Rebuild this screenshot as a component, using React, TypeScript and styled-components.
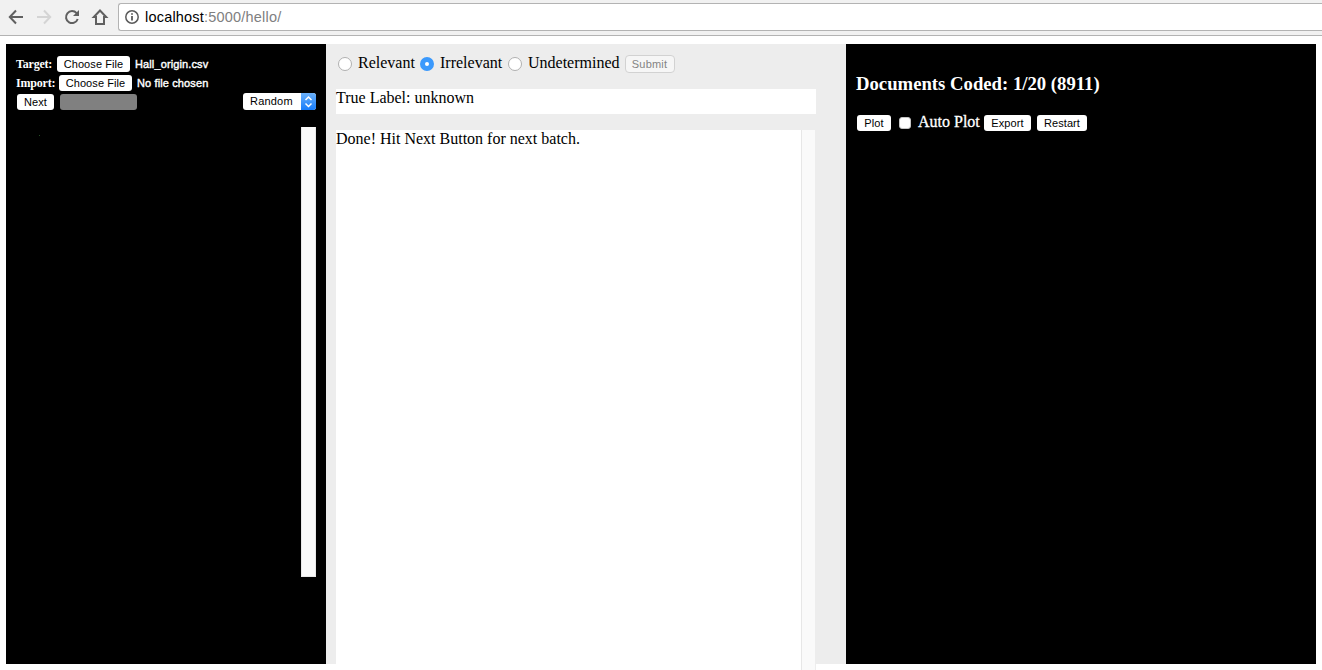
import React from "react";
import styled, { createGlobalStyle } from "styled-components";

const Global = createGlobalStyle`
  * { box-sizing: border-box; }
  html, body { margin: 0; padding: 0; background: #fff; overflow: hidden; }
  body { font: 16px "Liberation Serif", "Times New Roman", serif; color: #000; }
`;

const Window = styled.div`
  width: 1322px;
  height: 670px;
  overflow: hidden;
`;
const Toolbar = styled.header`
  display: flex;
  height: 36px;
  padding: 3px 0 0 7px;
  background: #f1f1f1;
  border-bottom: 1px solid #b3b3b3;
`;
const NavIcons = styled.svg`
  width: 111px;
  height: 28px;
  flex: none;
`;
const AddressBar = styled.div`
  display: flex;
  align-items: center;
  flex: 1;
  height: 28px;
  padding-left: 6px;
  background: #fff;
  border: 1px solid #b3b3b3;
  border-right: 0;
  border-radius: 3px 0 0 3px;
  font: 14.5px/20px "Liberation Sans", Arial, sans-serif;
  color: #808080;
`;
const InfoIcon = styled.svg`
  width: 14px;
  height: 14px;
  margin-right: 6px;
`;
const Url = styled.span`
  letter-spacing: 0.2px;
  b { font-weight: 400; color: #000; }
`;

const Page = styled.main`
  display: flex;
  height: 634px;
  padding: 8px 6px 0;
`;
const Sidebar = styled.section`
  width: 320px;
  height: 620px;
  padding: 10px;
  background: #000;
  color: #fff;
`;
const Center = styled.section`
  width: 520px;
  height: 620px;
  padding: 10px;
  background: #ededed;
`;
const Status = styled.section`
  width: 470px;
  height: 620px;
  padding: 28px 10px 0;
  background: #000;
  color: #fff;
`;

const Row = styled.div<{ $height: number; $indent?: number }>`
  display: flex;
  align-items: center;
  height: ${(p) => p.$height}px;
  padding-left: ${(p) => p.$indent ?? 0}px;
  white-space: nowrap;
`;
const FieldLabel = styled.span<{ $width: number }>`
  width: ${(p) => p.$width}px;
  font-size: 12px;
  font-weight: 700;
  line-height: 16px;
  letter-spacing: -0.2px;
`;
const Button = styled.button<{ $width: number; $gap?: number }>`
  display: block;
  flex: none;
  width: ${(p) => p.$width}px;
  height: 16px;
  margin: 0 ${(p) => p.$gap ?? 0}px 0 0;
  padding: 0;
  border: 0;
  border-radius: 3px;
  background: #fff;
  color: #000;
  font: 11px/16px "Liberation Sans", Arial, sans-serif;
  letter-spacing: 0.08px;
  text-align: center;
  white-space: nowrap;
`;
const SubmitButton = styled(Button)`
  height: 18px;
  padding-right: 1px;
  border: 1px solid #d2d2d2;
  border-radius: 4px;
  background: #f6f6f6;
  color: #848484;
  letter-spacing: 0.2px;
`;
const FileName = styled.span`
  font: 11px/16px "Liberation Sans", Arial, sans-serif;
  letter-spacing: 0.12px;
  -webkit-text-stroke: 0.4px #fff;
`;
const Progress = styled.div`
  width: 77px;
  height: 16px;
  border-radius: 3px;
  background: #808080;
`;
const Select = styled.div`
  display: flex;
  justify-content: space-between;
  width: 73px;
  height: 17px;
  margin: -1px 0 0 auto;
  padding-left: 7px;
  overflow: hidden;
  border-radius: 3px;
  background: #fff;
  color: #000;
  font: 11px/17px "Liberation Sans", Arial, sans-serif;
  letter-spacing: 0.2px;
`;
const Stepper = styled.svg`
  width: 15px;
  height: 17px;
  background: linear-gradient(#6bb1fa, #167cfb);
`;
const ListArea = styled.div`
  display: flex;
  justify-content: space-between;
  height: 450px;
  margin-top: 15px;
`;
const Speck = styled.i`
  width: 1px;
  height: 1px;
  margin: 8px 0 0 23px;
  background: #244f24;
`;
const ListScroll = styled.div`
  width: 15px;
  background: #fafafa;
  border: solid #e8e8e8;
  border-width: 0 1px 1px;
`;

const Choice = styled.span<{ $width: number }>`
  width: ${(p) => p.$width}px;
  line-height: 18px;
  margin-top: -2px;
`;
const LightChoice = styled(Choice)`
  -webkit-text-stroke: 0.3px #fff;
`;
const Radio = styled.span<{ $checked?: boolean }>`
  flex: none;
  width: 14px;
  height: 14px;
  margin-right: 6px;
  border-radius: 50%;
  border: ${(p) => (p.$checked ? "5px solid #3b99fc" : "1px solid #b0b0b0")};
  background: #fff;
`;
const LabelBand = styled.div`
  width: 480px;
  height: 25px;
  margin: 15px 0 16px;
  background: #fff;
  line-height: 18px;
`;
const Document = styled.div`
  display: flex;
  justify-content: space-between;
  width: 480px;
  height: 540px;
  background: #fff;
  line-height: 18px;
`;
const DocumentScroll = styled.div`
  width: 15px;
  border-left: 1px solid #e7e7e7;
  border-right: 1px solid #ededed;
  background: #fafafa;
`;
const Title = styled.h3`
  margin: 0 0 15px;
  font-size: 18.72px;
  line-height: 24px;
`;
const Checkbox = styled.span`
  width: 12px;
  height: 12px;
  margin-right: 7px;
  border: 1px solid #c4c4c4;
  border-radius: 3px;
  background: #fff;
`;

export default function App() {
  return (
    <Window>
      <Global />
      <Toolbar>
        <NavIcons viewBox="7 3 111 28" fill="none" stroke="#606060" strokeWidth="2">
          <path d="M23 17H10M16 10.5L9.8 17L16 23.5" />
          <path d="M37 17H50M44 10.5L50.2 17L44 23.5" stroke="#d4d4d4" />
          <path d="M76.6 13.2A6 6 0 1 0 77.7 19" />
          <path d="M79 10V16H73Z" fill="#606060" stroke="none" />
          <path d="M100 10.5L93.8 17H96V24H104V17H106.2Z" />
        </NavIcons>
        <AddressBar>
          <InfoIcon viewBox="0 0 14 14" fill="none" stroke="#5a5a5a" strokeWidth="1.5">
            <circle cx="7" cy="7" r="6.2" />
            <path d="M7 6V10.5M7 3.2V4.8" strokeWidth="1.8" />
          </InfoIcon>
          <Url><b>localhost</b>:5000/hello/</Url>
        </AddressBar>
      </Toolbar>
      <Page>
        <Sidebar>
          <Row $height={20}>
            <FieldLabel $width={41}>Target:</FieldLabel>
            <Button $width={73} $gap={5}>Choose File</Button>
            <FileName>Hall_origin.csv</FileName>
          </Row>
          <Row $height={18}>
            <FieldLabel $width={43}>Import:</FieldLabel>
            <Button $width={73} $gap={5}>Choose File</Button>
            <FileName>No file chosen</FileName>
          </Row>
          <Row $height={20} $indent={1}>
            <Button $width={37} $gap={6}>Next</Button>
            <Progress />
            <Select>
              Random
              <Stepper viewBox="0 0 15 17" fill="none" stroke="#fff" strokeWidth="1.5">
                <path d="M4.5 7L7.5 4L10.5 7M4.5 10.5L7.5 13.5L10.5 10.5" />
              </Stepper>
            </Select>
          </Row>
          <ListArea>
            <Speck />
            <ListScroll />
          </ListArea>
        </Sidebar>
        <Center>
          <Row $height={20} $indent={2}>
            <Radio />
            <Choice $width={62}>Relevant</Choice>
            <Radio $checked />
            <Choice $width={68}>Irrelevant</Choice>
            <Radio />
            <Choice $width={97}>Undetermined</Choice>
            <SubmitButton $width={50}>Submit</SubmitButton>
          </Row>
          <LabelBand>True Label: unknown</LabelBand>
          <Document>
            <span>Done! Hit Next Button for next batch.</span>
            <DocumentScroll />
          </Document>
        </Center>
        <Status>
          <Title>Documents Coded: 1/20 (8911)</Title>
          <Row $height={24} $indent={1}>
            <Button $width={34} $gap={8}>Plot</Button>
            <Checkbox />
            <LightChoice $width={66}>Auto Plot</LightChoice>
            <Button $width={47} $gap={6}>Export</Button>
            <Button $width={50}>Restart</Button>
          </Row>
        </Status>
      </Page>
    </Window>
  );
}
